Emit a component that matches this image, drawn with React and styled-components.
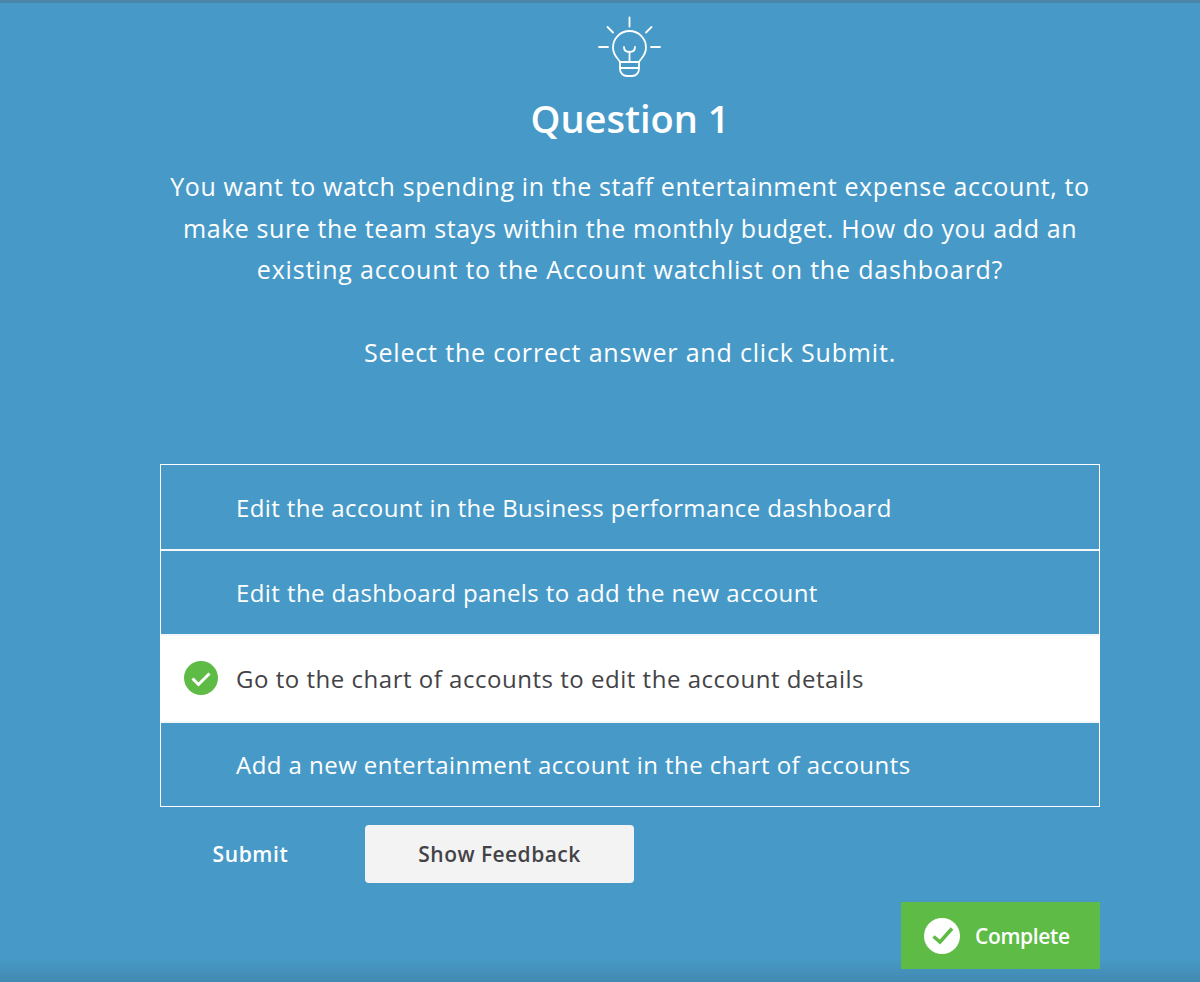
import React from "react";
import styled, { createGlobalStyle } from "styled-components";

const GlobalStyle = createGlobalStyle`
  html, body {
    margin: 0;
    padding: 0;
    background: #479ac8;
  }
  * {
    box-sizing: border-box;
  }
`;

const Page = styled.div`
  position: relative;
  width: 1200px;
  height: 982px;
  overflow: hidden;
  border-top: 3px solid #4b85a8;
  background: linear-gradient(to bottom, #479ac8 0, #479ac8 955px, #4289b0 979px);
  font-family: "Open Sans", sans-serif;
  color: #fff;
`;

const Column = styled.div`
  width: 940px;
  margin-left: 160px;
  display: flex;
  flex-direction: column;
`;

const Header = styled.div`
  display: flex;
  flex-direction: column;
  align-items: center;
  padding-top: 13px;
`;

const Bulb = styled.svg`
  width: 64px;
  height: 62px;
  display: block;
`;

const Title = styled.h1`
  margin: 16px 0 0;
  font-size: 38px;
  line-height: 48px;
  font-weight: 600;
  text-align: center;
`;

const Prompt = styled.p`
  margin: 24px 0 0;
  font-size: 25px;
  line-height: 41.5px;
  letter-spacing: 0.62px;
  text-align: center;
  white-space: nowrap;
`;

const PromptLine = styled.span`
  display: block;
  letter-spacing: ${(p) => p.$spacing}px;
`;

const Instruction = styled(Prompt)`
  margin-top: 41px;
  letter-spacing: 0.82px;
`;

const Options = styled.div`
  margin-top: 91px;
  border: 1px solid #fff;
  display: flex;
  flex-direction: column;
  gap: 2px;
  background: #f4f7f9;
`;

const Option = styled.div`
  height: ${(p) => p.$h}px;
  display: flex;
  align-items: center;
  padding-left: 75px;
  position: relative;
  font-size: 24px;
  letter-spacing: ${(p) => p.$spacing}px;
  background: ${(p) => (p.$selected ? "#fff" : "#479ac8")};
  color: ${(p) => (p.$selected ? "#434347" : "#fff")};
`;

const OptionCheck = styled.svg`
  position: absolute;
  left: 23px;
  top: 25px;
  width: 34px;
  height: 34px;
`;

const Actions = styled.div`
  margin-top: 18px;
  display: flex;
  align-items: center;
`;

const SubmitButton = styled.button`
  width: 205px;
  height: 58px;
  border: none;
  background: transparent;
  color: #fff;
  font-family: inherit;
  font-size: 21px;
  font-weight: 600;
  letter-spacing: 0.6px;
  padding: 0 24px 0 0;
`;

const FeedbackButton = styled.button`
  width: 269px;
  height: 58px;
  border: none;
  border-radius: 4px;
  background: #f3f3f3;
  color: #434347;
  font-family: inherit;
  font-size: 21px;
  font-weight: 600;
  letter-spacing: 0.45px;
`;

const CompleteRow = styled.div`
  margin-top: 19px;
  display: flex;
  justify-content: flex-end;
`;

const CompleteBadge = styled.div`
  width: 199px;
  height: 67px;
  background: #5dbb46;
  display: flex;
  align-items: center;
  gap: 15px;
  padding-left: 23px;
  font-size: 21px;
  font-weight: 600;
  letter-spacing: -0.35px;
`;

const CompleteIcon = styled.svg`
  width: 36px;
  height: 36px;
`;

const options = [
  { text: "Edit the account in the Business performance dashboard", h: 84, spacing: 0.39 },
  { text: "Edit the dashboard panels to add the new account", h: 83, spacing: 0.41 },
  { text: "Go to the chart of accounts to edit the account details", h: 85, spacing: 0.52, selected: true },
  { text: "Add a new entertainment account in the chart of accounts", h: 83, spacing: 0.45 },
];

export default function App() {
  return (
    <Page>
      <GlobalStyle />
      <Column>
        <Header>
          <Bulb viewBox="0 0 64 62" fill="none" stroke="#fff" strokeWidth="1.8" strokeLinecap="round" strokeLinejoin="round">
            <path d="M31.500 1.500v9M1 31h9M53 31h9M9.500 11l5.500 5.500M53.500 11l-5.500 5.500" />
            <path d="M22 46c-1-3-7-6-7-14.500a16.500 16.500 0 0 1 33 0c0 8.500-6 11.500-7 14.500z" />
            <path d="M26 31c0 3 2 5 5.500 5s5.500-2 5.500-5M31.500 36v10" />
            <path d="M22 46v7c0 4 3 7 7 7h5c4 0 7-3 7-7v-7M22 52h19" />
          </Bulb>
          <Title>Question 1</Title>
          <Prompt>
            <PromptLine $spacing={0.62}>
              You want to watch spending in the staff entertainment expense account, to
            </PromptLine>
            <PromptLine $spacing={0.6}>
              make sure the team stays within the monthly budget. How do you add an
            </PromptLine>
            <PromptLine $spacing={0.8}>
              existing account to the Account watchlist on the dashboard?
            </PromptLine>
          </Prompt>
          <Instruction>Select the correct answer and click Submit.</Instruction>
        </Header>
        <Options>
          {options.map((o) => (
            <Option key={o.text} $selected={o.selected} $h={o.h} $spacing={o.spacing}>
              {o.selected && (
                <OptionCheck viewBox="0 0 34 34">
                  <circle cx="17" cy="17" r="17" fill="#5dbb46" />
                  <path d="M8.500 17.500l6 6 11-11" fill="none" stroke="#fff" strokeWidth="3" />
                </OptionCheck>
              )}
              {o.text}
            </Option>
          ))}
        </Options>
        <Actions>
          <SubmitButton>Submit</SubmitButton>
          <FeedbackButton>Show Feedback</FeedbackButton>
        </Actions>
        <CompleteRow>
          <CompleteBadge>
            <CompleteIcon viewBox="0 0 36 36">
              <circle cx="18" cy="18" r="18" fill="#fff" />
              <path d="M9.500 18.500l6.500 5.500 12-13.500" fill="none" stroke="#5dbb46" strokeWidth="3.500" />
            </CompleteIcon>
            Complete
          </CompleteBadge>
        </CompleteRow>
      </Column>
    </Page>
  );
}
